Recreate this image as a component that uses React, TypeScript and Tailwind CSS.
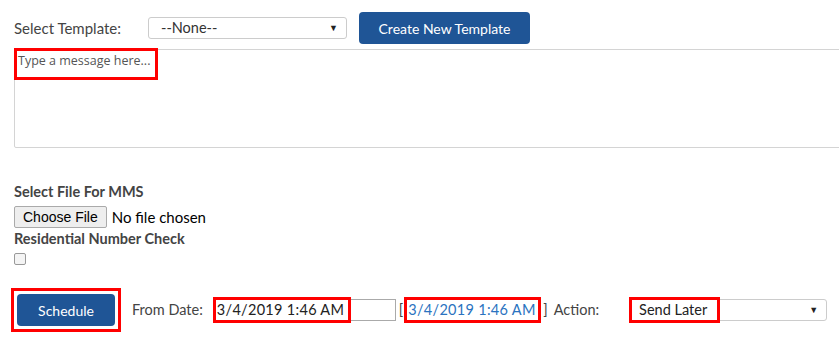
export default function App() {
  return (
    <div className="w-[839px] h-[347px] overflow-hidden bg-white text-[#333] font-['Lato',sans-serif] whitespace-nowrap">
      <div className="flex items-center pl-[14px] pt-[12px] h-[44px]">
        <span className="text-[15px] text-[#444] w-[134px]">Select Template:</span>
        <div className="flex items-center justify-between w-[199px] h-[22px] border border-[#ccc] rounded-[3px] pl-[12px] pr-[8px] text-[14.5px] text-[#333]">
          <span>--None--</span>
          <span className="text-[9px] text-[#222]">▼</span>
        </div>
        <button className="ml-[12px] w-[171px] h-[32px] rounded-[4px] bg-[#1f5596] text-white text-[14px]">
          Create New Template
        </button>
      </div>

      <div className="relative mt-[5px] ml-[14px] w-[900px] h-[99px] border border-[#d4d4d4] rounded-[2px]">
        <div className="absolute -left-[1px] -top-[2px] w-[144px] h-[32px] border-[3px] border-[#f00] pl-[1px] pt-[2px] font-['Open_Sans',sans-serif] text-[12.5px] leading-[16px] text-[#555]">
          Type a message here...
        </div>
      </div>

      <div className="pl-[14px] pt-[35px] flex flex-col">
        <span className="text-[14.5px] font-bold text-[#444] leading-[18px]">Select File For MMS</span>
        <div className="flex items-center mt-[5px] h-[22px] font-['Liberation_Sans',Arial,sans-serif]">
          <button className="h-[22px] px-[8px] border border-[#aaa] rounded-[2px] bg-[#eee] text-[14px] text-black">
            Choose File
          </button>
          <span className="ml-[5px] text-[15px] text-black font-['Lato',sans-serif]">No file chosen</span>
        </div>
        <span className="mt-[2px] text-[14.5px] font-bold text-[#444] leading-[18px]">Residential Number Check</span>
        <div className="mt-[5px] w-[12px] h-[12px] border border-[#999] rounded-[2px] bg-[#f4f4f4]" />
      </div>

      <div className="flex items-center pl-[11px] mt-[23px] text-[14.5px]">
        <div className="border-[3px] border-[#f00] p-[3px]">
          <button className="w-[98px] h-[32px] rounded-[4px] bg-[#1f5596] text-white text-[14px]">Schedule</button>
        </div>
        <span className="ml-[11px] text-[#444]">From Date:</span>
        <div className="ml-[10px] flex items-center w-[183px] h-[22px] border border-[#aaa]">
          <span className="-ml-[1px] h-[26px] w-[138px] border-[3px] border-[#f00] pl-[1px] flex items-center text-[14.5px] text-[#222] tracking-[0.3px]">
            3/4/2019 1:46 AM
          </span>
        </div>
        <span className="ml-[3px] mr-[1px] text-[#444]">[</span>
        <span className="h-[26px] w-[137px] border-[3px] border-[#f00] pl-[1px] flex items-center text-[14.5px] text-[#2a73c0] tracking-[0.3px]">
          3/4/2019 1:46 AM
        </span>
        <span className="ml-[2px] text-[#444]">]</span>
        <span className="ml-[6px] text-[#444]">Action:</span>
        <div className="relative ml-[30px] flex items-center justify-end w-[198px] h-[22px] border border-[#ccc] rounded-[3px] pr-[8px]">
          <span className="absolute -left-[1px] -top-[3px] w-[91px] h-[26px] border-[3px] border-[#f00] pl-[7px] flex items-center text-[14.5px] text-[#222]">
            Send Later
          </span>
          <span className="text-[9px] text-[#222]">▼</span>
        </div>
      </div>
    </div>
  );
}
